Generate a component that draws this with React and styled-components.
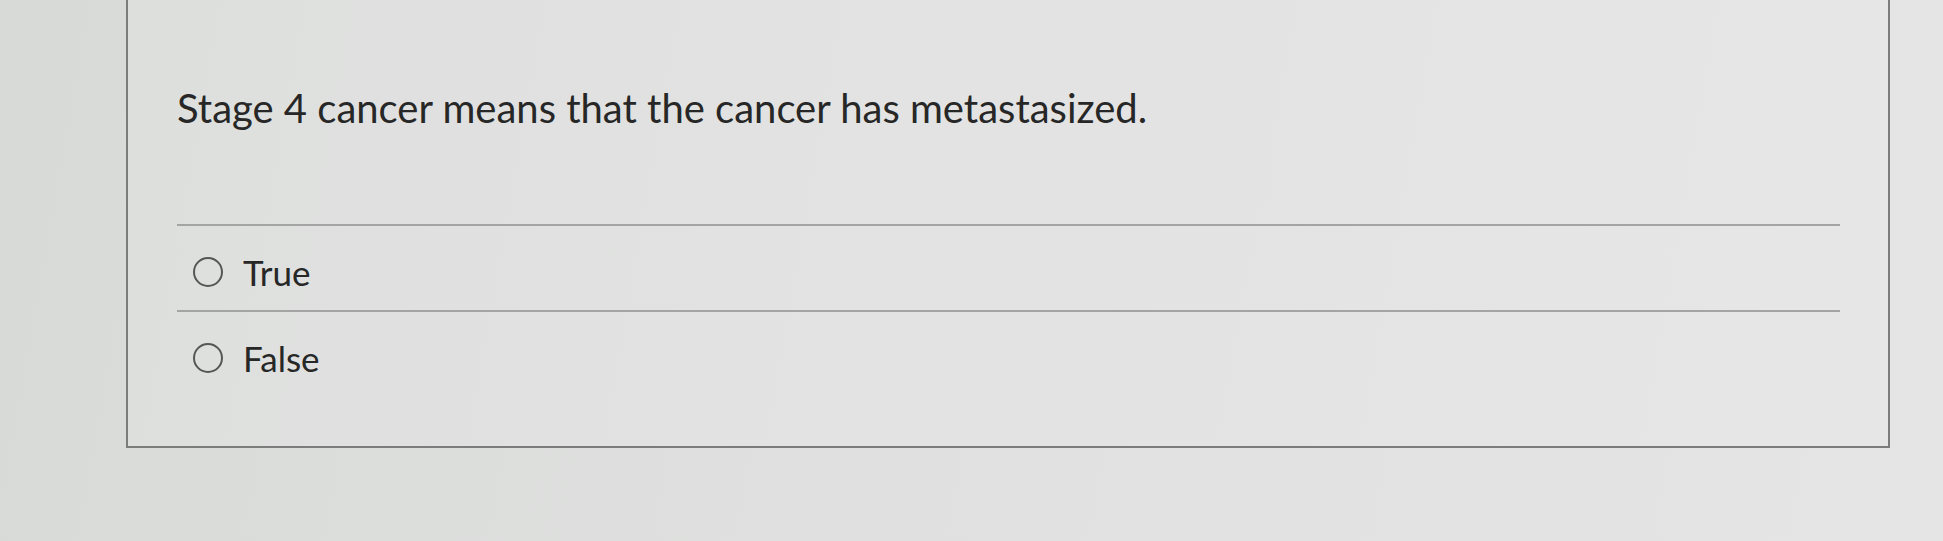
import React from "react";
import styled, { createGlobalStyle } from "styled-components";

const options = ["True", "False"];

const GlobalStyle = createGlobalStyle`
	html, body {
		margin: 0;
		padding: 0;
	}
	body {
		background: linear-gradient(100deg, #d8dad8 0%, #dfe0df 45%, #e4e5e4 100%);
		font-family: Lato, "Open Sans", sans-serif;
		width: 1943px;
		height: 541px;
		overflow: hidden;
	}
`;

const App = () => {
	return (
		<>
			<GlobalStyle />
			<StyledPage>
				<StyledCard>
					<StyledQuestion>
						Stage 4 cancer means that the cancer has metastasized.
					</StyledQuestion>
					<StyledOptions>
						{options.map((label) => (
							<StyledOption key={label}>
								<StyledRadio />
								<StyledLabel>{label}</StyledLabel>
							</StyledOption>
						))}
					</StyledOptions>
				</StyledCard>
			</StyledPage>
		</>
	);
};

const StyledPage = styled.div`
	padding: 0 53px 0 126px;
`;

const StyledCard = styled.div`
	border: 2px solid #7b7c7b;
	border-top: none;
	padding: 84px 48px 50px 49px;
	background: rgba(236, 237, 236, 0.25);
`;

const StyledQuestion = styled.div`
	font-size: 40px;
	line-height: 48px;
	color: #262726;
	margin: 0 0 92px 0;
`;

const StyledOptions = styled.div`
	border-top: 2px solid #a3a4a3;
`;

const StyledOption = styled.label`
	display: flex;
	align-items: center;
	padding: 25px 0 17px 16px;
	border-bottom: 2px solid #a3a4a3;
	&:last-child {
		border-bottom: none;
	}
`;

const StyledRadio = styled.span`
	width: 26px;
	height: 26px;
	border: 2px solid #555655;
	border-radius: 50%;
	margin: 0 20px 0 0;
	flex: 0 0 auto;
`;

const StyledLabel = styled.span`
	font-size: 35px;
	line-height: 42px;
	color: #262726;
`;

export default App;
